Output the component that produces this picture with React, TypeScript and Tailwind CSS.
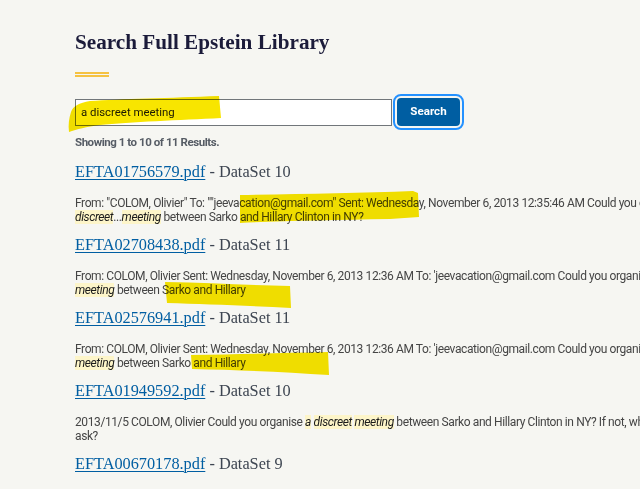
import React from "react";

type Piece = string | { hl: string };

type Result = {
  file: string;
  set: string;
  lines: Piece[][];
};

const results: Result[] = [
  {
    file: "EFTA01756579.pdf",
    set: "DataSet 10",
    lines: [
      [
        'From: "COLOM, Olivier" To: ""jeevacation@gmail.com" Sent: Wednesday, November 6, 2013 12:35:46 AM Could you organise a',
      ],
      [{ hl: "discreet" }, "...", { hl: "meeting" }, " between Sarko and Hillary Clinton in NY?"],
    ],
  },
  {
    file: "EFTA02708438.pdf",
    set: "DataSet 11",
    lines: [
      [
        "From: COLOM, Olivier Sent: Wednesday, November 6, 2013 12:36 AM To: 'jeevacation@gmail.com Could you organise a discreet",
      ],
      [{ hl: "meeting" }, " between Sarko and Hillary"],
    ],
  },
  {
    file: "EFTA02576941.pdf",
    set: "DataSet 11",
    lines: [
      [
        "From: COLOM, Olivier Sent: Wednesday, November 6, 2013 12:36 AM To: 'jeevacation@gmail.com Could you organise a discreet",
      ],
      [{ hl: "meeting" }, " between Sarko and Hillary"],
    ],
  },
  {
    file: "EFTA01949592.pdf",
    set: "DataSet 10",
    lines: [
      [
        "2013/11/5 COLOM, Olivier Could you organise ",
        { hl: "a" },
        " ",
        { hl: "discreet" },
        " ",
        { hl: "meeting" },
        " between Sarko and Hillary Clinton in NY? If not, who should I",
      ],
      ["ask?"],
    ],
  },
  {
    file: "EFTA00670178.pdf",
    set: "DataSet 9",
    lines: [
      ["From: COLOM, Olivier Sent: Wednesday, November 6, 2013 12:36 AM"],
    ],
  },
];

const serif = "font-['Liberation_Serif',serif]";
const sans = "font-['Roboto','Liberation_Sans',sans-serif]";

function Line({ pieces }: { pieces: Piece[] }) {
  return (
    <div className="whitespace-nowrap h-[14px] leading-[14px]">
      {pieces.map((p, i) =>
        typeof p === "string" ? (
          <span key={i}>{p}</span>
        ) : (
          <em key={i} className="italic text-[#1b1b1b] bg-[#fdf5c9]">
            {p.hl}
          </em>
        )
      )}
    </div>
  );
}

function ResultItem({ r }: { r: Result }) {
  return (
    <div className="flex flex-col">
      <div className={`${serif} text-[16.3px] leading-[24px] h-[24px] whitespace-nowrap`}>
        <a href="#" className="text-[#005ea2] underline decoration-1 underline-offset-2">
          {r.file}
        </a>
        <span className="text-[#3d4551]"> - {r.set}</span>
      </div>
      <div className={`${sans} mt-[12px] text-[12px] tracking-[-0.4px] text-[#454545]`}>
        {r.lines.map((l, i) => (
          <Line key={i} pieces={l} />
        ))}
      </div>
      <div className="h-[9px]" />
    </div>
  );
}

// Marker strokes laid over the page
function MarkerStrokes() {
  return (
    <svg
      className="absolute inset-0 pointer-events-none mix-blend-multiply"
      width={640}
      height={489}
      viewBox="0 0 640 489"
    >
      <g fill="#f8e500">
        <path d="M71,112 C73,106 79,103 90,101 C120,99 170,98 219,96 L221,118 C180,120 130,122 100,125 C86,127 77,129 69,132 C68,125 69,118 71,112 Z" />
        <path d="M240,195 C300,194 360,193 413,191 L418,193 L419,217 L390,219 C330,220 280,221 240,223 Z" />
        <path d="M165,282 C210,283 250,285 290,286 L291,308 C250,306 205,304 167,303 Z" />
        <path d="M191,355 C240,354 285,353 328,352 L329,375 C285,372 240,370 192,369 Z" />
      </g>
    </svg>
  );
}

export default function App() {
  return (
    <div className="relative w-[640px] h-[489px] overflow-hidden bg-[#f6f6f2]">
      <div className="flex flex-col pl-[75px] pt-[28px] w-[900px]">
        <h1 className={`${serif} font-bold text-[21.2px] leading-[28px] text-[#1b1b3a]`}>
          Search Full Epstein Library
        </h1>
        <div className="mt-[16px] flex flex-col gap-[1px] w-[34px]">
          <div className="h-[2px] bg-[#f5c242]" />
          <div className="h-[2px] bg-[#f5c242]" />
        </div>

        <div className="mt-[21px] flex items-center gap-[5px] h-[28px]">
          <div
            className={`${sans} w-[317px] h-[27px] mt-[1px] border border-[#71767a] bg-white flex items-center px-[5px] text-[11.4px] text-[#1b1b1b]`}
          >
            a discreet meeting
          </div>
          <button
            className={`${sans} w-[63px] h-[28px] rounded-[4px] bg-[#005ea2] text-white font-bold text-[11.6px] outline-2 outline-offset-2 outline-[#2491ff]`}
          >
            Search
          </button>
        </div>

        <div
          className={`${sans} mt-[8px] h-[16px] leading-[16px] text-[11.5px] tracking-[-0.45px] font-bold text-[#565c65]`}
        >
          Showing 1 to 10 of 11 Results.
        </div>

        <div className="mt-[10px] flex flex-col">
          {results.map((r) => (
            <ResultItem key={r.file} r={r} />
          ))}
        </div>
      </div>
      <MarkerStrokes />
    </div>
  );
}
